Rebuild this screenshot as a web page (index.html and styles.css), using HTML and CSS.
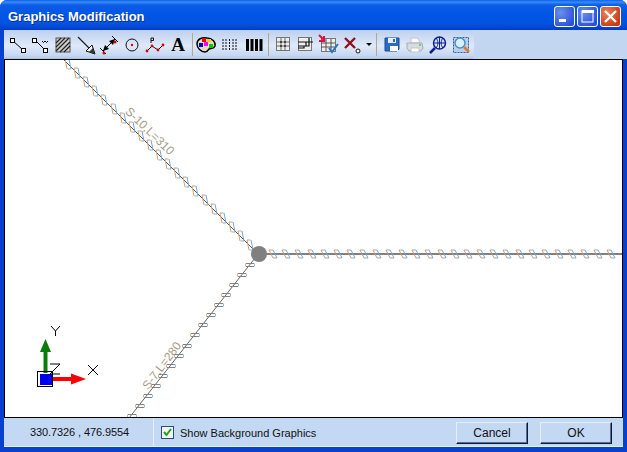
FILE: index.html
```html
<!DOCTYPE html>
<html lang="en">
<head>
<meta charset="utf-8">
<title>Graphics Modification</title>
<link rel="stylesheet" href="styles.css">
</head>
<body>
<div class="window">
  <header class="titlebar">
    <h1 class="title">Graphics Modification</h1>
    <div class="controls">
      <button class="ctl ctl-blue"><svg width="21" height="21" viewBox="0 0 21 21"><rect x="5" y="13" width="7" height="3" fill="#fff"/></svg></button>
      <button class="ctl ctl-blue"><svg width="21" height="21" viewBox="0 0 21 21"><rect x="5" y="5" width="11" height="11" fill="none" stroke="#fff"/><rect x="5" y="4" width="12" height="3" fill="#fff"/></svg></button>
      <button class="ctl ctl-red"><svg width="21" height="21" viewBox="0 0 21 21"><path d="M5 5l11 11M16 5L5 16" stroke="#fff" stroke-width="2.4"/></svg></button>
    </div>
  </header>
  <div class="client">
    <div class="toolbar">
      <div class="tools">
        <svg class="tool" viewBox="0 0 22 22"><path d="M6 6l11 10" stroke="#000"/><rect x="4.500" y="4.500" width="4" height="4" fill="#fff" stroke="#000"/><rect x="15.500" y="14.500" width="4" height="4" fill="#fff" stroke="#000"/></svg>
        <svg class="tool" viewBox="0 0 22 22"><path d="M6 6l10 10M13 7l1.500 1.500L16 7l1.500 1.500L19 7" stroke="#000" fill="none"/><rect x="3.500" y="4.500" width="4" height="4" fill="#fff" stroke="#000"/><rect x="14.500" y="14.500" width="4" height="4" fill="#fff" stroke="#000"/></svg>
        <svg class="tool" viewBox="0 0 22 22"><rect x="4" y="4" width="14" height="14" fill="#ccc" stroke="#555"/><path d="M4 9l5-5M4 13l9-9M4 17L17 4M8 18l10-10M12 18l6-6" stroke="#222" stroke-width="1.200"/></svg>
        <svg class="tool" viewBox="0 0 22 22"><path d="M3 3l12 12" stroke="#222" stroke-width="1.200"/><path d="M20 20l-9-3 6-6z" fill="#eee" stroke="#111"/><path d="M14 18l4-4 2 6z" fill="#333"/></svg>
        <svg class="tool" viewBox="0 0 22 22"><path d="M5 17L17 5M14 2l6 6M2 14l6 6" stroke="#000" fill="none"/><path d="M17 5l-6 2 4 4zM5 17l6-2-4-4z" fill="#000"/><circle cx="17" cy="8" r="1.500" fill="#d00"/><circle cx="6" cy="19" r="1.500" fill="#d00"/></svg>
        <svg class="tool" viewBox="0 0 22 22"><circle cx="11" cy="11" r="6" fill="none" stroke="#111"/><circle cx="11" cy="11" r="1.200" fill="#d00"/></svg>
        <svg class="tool" viewBox="0 0 22 22"><path d="M3 17l5-5 6 4 5-5" stroke="#111" fill="none"/><path d="M7 9V4h2.500v2.500H7" stroke="#111" fill="none"/><circle cx="3" cy="17" r="1.400" fill="#d00"/><circle cx="8" cy="12" r="1.400" fill="#d00"/><circle cx="14" cy="16" r="1.400" fill="#d00"/><circle cx="19" cy="11" r="1.400" fill="#d00"/></svg>
        <span class="tool-a">A</span>
      </div>
      <span class="sep sep-a"></span>
      <div class="tools">
        <svg class="tool" viewBox="0 0 22 22"><path d="M1 10c0-5 5-7 10-6 5 0 9 4 8 8-1 3-4 2-6 3-1 1-1 3-4 3-4 0-8-4-8-8z" fill="#e8dcc0" stroke="#000" stroke-width="1.500"/><rect x="6" y="4" width="4" height="4" fill="#e00"/><rect x="3" y="9" width="4" height="4" fill="#00c"/><rect x="8" y="8" width="4" height="4" fill="#f0f"/><rect x="11" y="5" width="4" height="3" fill="#fc0"/><rect x="13" y="10" width="4" height="4" fill="#0c0"/></svg>
        <svg class="tool" viewBox="0 0 22 22"><path d="M4 5v12M7 5v12M10.500 5v12M14 5v12M17 5v12" stroke="#111" stroke-dasharray="2 1"/></svg>
        <svg class="tool" viewBox="0 0 22 22"><path d="M5.500 5v12M10 5v12M14.500 5v12M19 5v12" stroke="#000" stroke-width="3"/></svg>
      </div>
      <span class="sep sep-b"></span>
      <div class="tools">
        <svg class="tool" viewBox="0 0 22 22"><rect x="4.500" y="3.500" width="13" height="13" fill="#eee" stroke="#777"/><path d="M4 8h14M4 12h14M9 4v13M13 4v13" stroke="#666"/><path d="M8 8h2M12 8h2M8 12h2M12 12h2" stroke="#000"/></svg>
        <svg class="tool" viewBox="0 0 22 22"><rect x="3.500" y="3.500" width="13" height="13" fill="#eee" stroke="#777"/><path d="M3 8h8v4H3M3 14h6v-2M11 8h7M14 4v8h-3" stroke="#111" stroke-width="1.200" fill="none"/></svg>
        <svg class="tool" viewBox="0 0 22 22"><rect x="3.500" y="4.500" width="14" height="13" fill="#eee" stroke="#777"/><path d="M3 9h14M3 13h14M8 5v12M13 5v12" stroke="#555"/><path d="M1 1l6 6M6 2v5H1" stroke="#e01040" stroke-width="2" fill="none"/><path d="M11 14l3 4 6-8" stroke="#2a70c8" stroke-width="2" fill="none"/></svg>
        <svg class="tool" viewBox="0 0 22 22"><path d="M4 4l10 10M14 4L4 14" stroke="#901020" stroke-width="2.400"/><circle cx="17" cy="17" r="2" fill="#fff" stroke="#111"/></svg>
        <svg class="caret" viewBox="0 0 6 4"><path d="M0 0h6L3 3z" fill="#000"/></svg>
      </div>
      <span class="sep sep-c"></span>
      <div class="tools">
        <svg class="tool" viewBox="0 0 22 22"><path d="M4 4h14v11l-2 2H4z" fill="#2a6cc4" stroke="#1a4a90"/><rect x="7" y="4" width="8" height="5" fill="#e8eef8"/><rect x="12" y="5" width="2" height="3" fill="#2a6cc4"/><rect x="9" y="12" width="8" height="5" fill="#fff"/></svg>
        <svg class="tool" viewBox="0 0 22 22"><path d="M7 4h7l2 5H7z" fill="#fafafa" stroke="#c4c4c4"/><path d="M3 9h15l1 5-2 3H5l-2-3z" fill="#d8dce2" stroke="#a8aab4"/><rect x="7" y="14" width="8" height="4" fill="#fff" stroke="#c4c4c4"/><circle cx="16" cy="11" r="1" fill="#4c4"/></svg>
        <svg class="tool" viewBox="0 0 22 22"><circle cx="12.500" cy="9" r="6" fill="none" stroke="#102090" stroke-width="1.500"/><path d="M6.500 9h12M12.500 3v12M9 4c2.500 3 2.500 7 0 10M16 4c-2.500 3-2.500 7 0 10" stroke="#102090" fill="none"/><path d="M8 14l-5 5" stroke="#102090" stroke-width="2.500"/></svg>
        <svg class="tool" viewBox="0 0 22 22"><rect x="3.500" y="3.500" width="15" height="15" fill="#b8d0ec" stroke="#3858a8" stroke-dasharray="2 1"/><circle cx="10" cy="9" r="5" fill="#d8f0fc" stroke="#4a90c8" stroke-width="1.500"/><path d="M14 13l5 5" stroke="#e07830" stroke-width="2.500"/></svg>
      </div>
    </div>
    <div class="canvas">
      <svg class="drawing" viewBox="0 0 618 357" width="618" height="357">
        <defs>
          <g id="d"><path d="M-3-5H.5M-.5 5H3" stroke="#aaa"/><path d="M-3-5L-1 5" stroke="#d8a070" fill="none"/><path d="M1-5L3 5" stroke="#70a8d8" fill="none"/></g>
          <g id="h"><path d="M-4-4H0M0 4H4" stroke="#aaa"/><path d="M-4-4L0 4" stroke="#d09878" fill="none"/><path d="M0-4L4 4" stroke="#70a8e0" fill="none"/></g>
          <g id="s"><path d="M-4-1.500H4" stroke="#8a8078"/><path d="M-4 1.500H4" stroke="#78848e"/><path d="M-4.500-1.500V1.500" stroke="#d8b090"/><path d="M4.500-1.500V1.500" stroke="#90c0e0"/></g>
        </defs>
        <g class="geom" transform="translate(-5 -60)">
          <path d="M64 60L255 251" stroke="#555"/>
          <path d="M259 254H623" stroke="#808080" stroke-width="2"/>
          <path d="M255 258L129 418" stroke="#666"/>
          <use href="#d" x="68" y="64"/><use href="#d" x="77" y="73"/><use href="#d" x="86" y="82"/><use href="#d" x="95" y="91"/><use href="#d" x="104" y="100"/><use href="#d" x="114" y="109"/><use href="#d" x="123" y="118"/><use href="#d" x="132" y="127"/><use href="#d" x="141" y="136"/><use href="#d" x="150" y="145"/><use href="#d" x="159" y="155"/><use href="#d" x="168" y="164"/><use href="#d" x="177" y="173"/><use href="#d" x="186" y="182"/><use href="#d" x="195" y="191"/><use href="#d" x="205" y="200"/><use href="#d" x="214" y="209"/><use href="#d" x="223" y="218"/><use href="#d" x="232" y="227"/><use href="#d" x="241" y="236"/><use href="#d" x="250" y="245"/>
          <use href="#h" x="273" y="254"/><use href="#h" x="286" y="254"/><use href="#h" x="299" y="254"/><use href="#h" x="312" y="254"/><use href="#h" x="325" y="254"/><use href="#h" x="338" y="254"/><use href="#h" x="351" y="254"/><use href="#h" x="364" y="254"/><use href="#h" x="377" y="254"/><use href="#h" x="390" y="254"/><use href="#h" x="403" y="254"/><use href="#h" x="416" y="254"/><use href="#h" x="429" y="254"/><use href="#h" x="442" y="254"/><use href="#h" x="455" y="254"/><use href="#h" x="468" y="254"/><use href="#h" x="481" y="254"/><use href="#h" x="494" y="254"/><use href="#h" x="507" y="254"/><use href="#h" x="520" y="254"/><use href="#h" x="533" y="254"/><use href="#h" x="546" y="254"/><use href="#h" x="559" y="254"/><use href="#h" x="572" y="254"/><use href="#h" x="585" y="254"/><use href="#h" x="598" y="254"/><use href="#h" x="611" y="254"/>
          <use href="#s" x="250" y="265"/><use href="#s" x="242" y="275"/><use href="#s" x="234" y="285"/><use href="#s" x="226" y="295"/><use href="#s" x="219" y="305"/><use href="#s" x="211" y="315"/><use href="#s" x="203" y="325"/><use href="#s" x="195" y="335"/><use href="#s" x="187" y="346"/><use href="#s" x="179" y="356"/><use href="#s" x="171" y="366"/><use href="#s" x="163" y="376"/><use href="#s" x="156" y="386"/><use href="#s" x="148" y="396"/><use href="#s" x="140" y="406"/><use href="#s" x="132" y="416"/>
          <circle cx="259" cy="254" r="8" fill="#808080"/>
          <text class="label" transform="translate(147 134) rotate(44)">S-10,L=310</text>
          <text class="label" transform="translate(165 368) rotate(-53)">S-7,L=280</text>
          <path d="M45.500 373V350" stroke="#0a7a0a" stroke-width="4"/>
          <path d="M45.500 339l-5.500 13h11z" fill="#0a7a0a"/>
          <path d="M45 379H72" stroke="#f00" stroke-width="4"/>
          <path d="M86 379l-15-5.500v11z" fill="#f00"/>
          <rect x="37.500" y="371.500" width="15" height="15" fill="none" stroke="#000"/>
          <rect x="40" y="374" width="12" height="11" fill="#0000f0"/>
          <path d="M51 326l4.500 5 4.500-5M55.500 331v5" stroke="#000" fill="none"/>
          <path d="M50 364h10l-10 10h10" stroke="#000" fill="none"/>
          <path d="M88 365l10 10M98 365L88 375" stroke="#000" fill="none"/>
        </g>
      </svg>
    </div>
    <footer class="statusbar">
      <div class="coords">330.7326 , 476.9554</div>
      <label class="show">
        <span class="check"><svg width="11" height="11" viewBox="0 0 11 11"><path d="M2 5l2.500 3L9 2" stroke="#21a121" stroke-width="2" fill="none"/></svg></span>
        Show Background Graphics
      </label>
      <div class="actions">
        <button class="btn">Cancel</button>
        <button class="btn">OK</button>
      </div>
    </footer>
  </div>
</div>
</body>
</html>
```

FILE: styles.css
```css
* { box-sizing: border-box; }
html, body { margin: 0; height: 100%; background: #fff; }
body { font-family: "Liberation Sans", Arial, sans-serif; overflow: hidden; }

.window {
  width: 627px;
  height: 452px;
  display: flex;
  flex-direction: column;
  border-radius: 7px 7px 0 0;
  overflow: hidden;
  background: #0840d0;
}

.titlebar {
  height: 30px;
  flex: none;
  display: flex;
  align-items: center;
  justify-content: space-between;
  padding: 3px 6px 0 8px;
  background: linear-gradient(#0a5fe8 0, #3a8cf8 2px, #0b5ce6 5px, #0055e5 16px, #0352e0 24px, #0340c8 29px, #0831d9 30px);
}
.title {
  margin: 0;
  font-size: 13px;
  font-weight: bold;
  color: #fff;
  text-shadow: 1px 1px 0 #0a2f9a;
}
.controls { display: flex; gap: 2px; }
.ctl {
  width: 21px;
  height: 21px;
  padding: 0;
  border: 1px solid #fff;
  border-radius: 3px;
  display: flex;
}
.ctl svg { margin: -1px; }
.ctl-blue { background: radial-gradient(circle at 30% 30%, #6a8ef0, #2a50d8 80%); }
.ctl-red { background: radial-gradient(circle at 30% 30%, #e8805a, #c83a10 80%); }

.client {
  flex: 1;
  margin: 0 4px 5px;
  min-height: 0;
  display: flex;
  flex-direction: column;
  background: #c3d8f3;
}

.toolbar {
  height: 29px;
  width: 470px;
  flex: none;
  display: flex;
  align-items: center;
  padding: 0 0 0 2px;
  border-radius: 0 3px 3px 0;
  background: linear-gradient(#bcd0ee, #dfe9fa 55%, #c4d6f0 90%, #a8bfe0);
  box-shadow: 200px 0 0 #c3d6f1;
}
.tools { display: flex; align-items: center; gap: 1px; height: 100%; }
.tool { width: 22px; height: 22px; display: block; }
.tool-a {
  width: 22px;
  text-align: center;
  font: bold 19px "Liberation Serif", serif;
  color: #000;
}
.caret { width: 6px; height: 4px; margin-left: 2px; }
.sep { width: 1px; height: 23px; background: #b0a890; }
.sep-a { margin: 0 3px; }
.sep-b { margin: 0 3px 0 4px; }
.sep-c { margin: 0 4px 0 4px; }

.canvas {
  height: 358px;
  flex: none;
  border-top: 1px solid #000;
  border-left: 1px solid #000;
  border-right: 1px solid #000;
  background: #fff;
  overflow: hidden;
}
.drawing { display: block; }
.label {
  font-size: 12px;
  fill: #a89a88;
  text-anchor: middle;
}

.statusbar {
  flex: 1;
  min-height: 0;
  display: flex;
  align-items: center;
  padding-top: 1px;
  border-top: 1px solid #000;
  border-bottom: 1px solid #e6eefa;
  font-size: 11px;
  color: #111;
}
.coords {
  width: 150px;
  height: 100%;
  padding-left: 26px;
  line-height: 27px;
  letter-spacing: -0.1px;
  border-right: 1px solid #e6eefa;
}
.show {
  display: flex;
  align-items: center;
  gap: 6px;
  margin-left: 7px;
  white-space: nowrap;
}
.check {
  width: 13px;
  height: 13px;
  background: #f4f4ec;
  border: 1px solid #1c5180;
  display: flex;
  align-items: center;
  justify-content: center;
}
.actions { margin-left: auto; margin-right: 11px; display: flex; gap: 12px; }
.btn {
  width: 72px;
  height: 22px;
  padding: 0;
  font: 12px "Liberation Sans", Arial, sans-serif;
  color: #111;
  background: #c3d8f3;
  border: 1px solid;
  border-color: #e6eefa #0c1a40 #0c1a40 #e6eefa;
  box-shadow: inset -1px -1px 0 #5a6a90;
}
```
